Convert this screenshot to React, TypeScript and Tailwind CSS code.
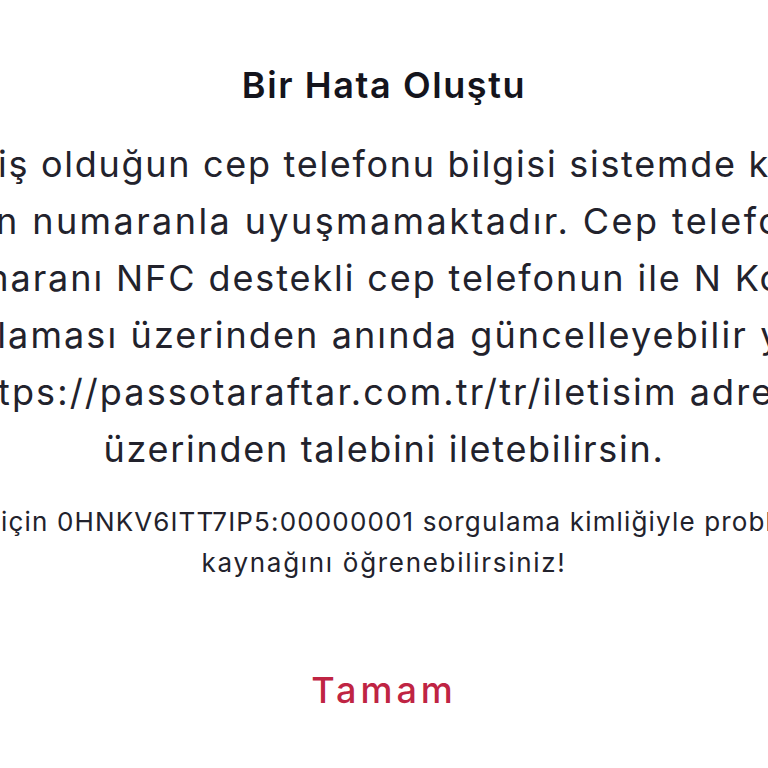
import React from "react";

const bodyLines: { text: string; track: string }[] = [
  { text: "Girmiş olduğun cep telefonu bilgisi sistemde kayıtlı", track: "tracking-[1.7px]" },
  { text: "olan numaranla uyuşmamaktadır. Cep telefonu", track: "tracking-[2.4px]" },
  { text: "numaranı NFC destekli cep telefonun ile N Kolay", track: "tracking-[1.9px]" },
  { text: "uygulaması üzerinden anında güncelleyebilir ya da", track: "tracking-[2.1px]" },
  { text: "https://passotaraftar.com.tr/tr/iletisim adresi", track: "tracking-[2.1px]" },
  { text: "üzerinden talebini iletebilirsin.", track: "tracking-[1.7px]" },
];

const smallLines: { text: string; track: string }[] = [
  { text: "Hata için 0HNKV6ITT7IP5:00000001 sorgulama kimliğiyle problemin", track: "tracking-[1.15px]" },
  { text: "kaynağını öğrenebilirsiniz!", track: "tracking-[1.7px]" },
];

export default function App() {
  return (
    <div
      className="w-[768px] h-[768px] overflow-hidden bg-white flex flex-col items-center"
      style={{ fontFamily: "Inter, 'Noto Sans', sans-serif" }}
    >
      <div className="mt-[61px] h-[48px] leading-[48px] text-[36px] font-semibold tracking-[1.6px] text-[#14141c] whitespace-nowrap">
        Bir Hata Oluştu
      </div>
      <div className="mt-[27px] flex flex-col items-center text-[36px] text-[#22222c]">
        {bodyLines.map((l) => (
          <div key={l.text} className={`h-[57px] leading-[57px] whitespace-nowrap ${l.track}`}>
            {l.text}
          </div>
        ))}
      </div>
      <div className="mt-[23px] flex flex-col items-center text-[26px] text-[#22222c]">
        {smallLines.map((l) => (
          <div key={l.text} className={`h-[41px] leading-[41px] whitespace-nowrap ${l.track}`}>
            {l.text}
          </div>
        ))}
      </div>
      <div className="mt-[83px] h-[48px] leading-[48px] text-[36px] font-medium tracking-[4px] text-[#bf2443] whitespace-nowrap">
        Tamam
      </div>
    </div>
  );
}
